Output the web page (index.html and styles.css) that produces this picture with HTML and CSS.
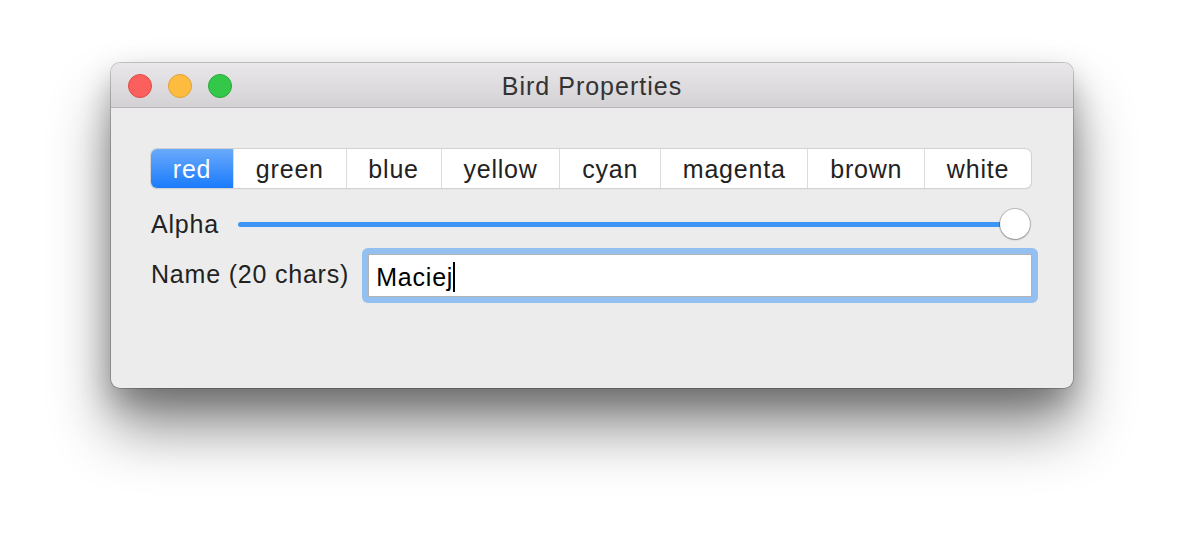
FILE: index.html
```html
<!DOCTYPE html>
<html>
<head>
<meta charset="utf-8">
<link rel="stylesheet" href="styles.css">
</head>
<body>
<div class="window">
  <div class="titlebar">
    <div class="lights">
      <span class="light red"></span>
      <span class="light yellow"></span>
      <span class="light green"></span>
    </div>
    <div class="title">Bird Properties</div>
  </div>
  <div class="content">
    <div class="segments">
      <div class="seg selected">red</div>
      <div class="seg">green</div>
      <div class="seg">blue</div>
      <div class="seg">yellow</div>
      <div class="seg">cyan</div>
      <div class="seg">magenta</div>
      <div class="seg">brown</div>
      <div class="seg">white</div>
    </div>
    <div class="row slider-row">
      <div class="label">Alpha</div>
      <div class="slider">
        <div class="track"></div>
        <div class="knob"></div>
      </div>
    </div>
    <div class="row name-row">
      <div class="label">Name (20 chars)</div>
      <div class="field-ring">
        <div class="field"><span class="value">Maciej</span><span class="caret"></span></div>
      </div>
    </div>
  </div>
</div>
</body>
</html>
```

FILE: styles.css
```css
html, body {
  margin: 0;
  padding: 0;
  background: #ffffff;
}
body {
  width: 1184px;
  height: 548px;
  padding: 63px 0 0 111px;
  box-sizing: border-box;
  font-family: "Liberation Sans", Arial, sans-serif;
  color: #222222;
  overflow: hidden;
}
.window {
  width: 962px;
  height: 325px;
  background: #ececec;
  border-radius: 9px;
  box-shadow: 0 0 0 1px rgba(0,0,0,0.2), 0 40px 60px rgba(0,0,0,0.45), 0 14px 30px rgba(0,0,0,0.25);
  display: flex;
  flex-direction: column;
  overflow: hidden;
}
.titlebar {
  height: 44px;
  flex: none;
  background: linear-gradient(#e9e7e9, #d3d1d3);
  border-bottom: 1px solid #b7b5b7;
  display: flex;
  align-items: center;
  position: relative;
}
.lights {
  display: flex;
  gap: 16px;
  padding-left: 17px;
  position: absolute;
  left: 0;
  top: 11px;
}
.light {
  width: 24px;
  height: 24px;
  border-radius: 50%;
  box-sizing: border-box;
}
.light.red { background: #fc605c; border: 1px solid #de4a46; }
.light.yellow { background: #fdbc40; border: 1px solid #dea236; }
.light.green { background: #34c84a; border: 1px solid #27a83a; }
.title {
  flex: 1;
  text-align: center;
  font-size: 25px;
  letter-spacing: 1px;
  color: #333333;
  padding-top: 2px;
}
.content {
  padding: 41px 42px 0 40px;
  display: flex;
  flex-direction: column;
}
.segments {
  display: flex;
  height: 39px;
  box-sizing: border-box;
  background: #ffffff;
  border-radius: 6px;
  box-shadow: 0 0 0 1px #d2d2d2, 0 1px 1px rgba(0,0,0,0.25);
  overflow: hidden;
}
.seg {
  flex: 1 1 auto;
  display: flex;
  align-items: center;
  justify-content: center;
  font-size: 25px;
  letter-spacing: 0.8px;
  color: #222222;
  border-left: 1px solid #dcdcdc;
  padding: 1px 18px 0;
}
.seg:first-child { border-left: none; }
.seg.selected {
  background: linear-gradient(#6aaafb, #1a7bfb);
  color: #ffffff;
}
.row {
  display: flex;
  align-items: center;
}
.label {
  font-size: 25px;
  letter-spacing: 0.8px;
  color: #222222;
  flex: none;
}
.slider-row {
  margin-top: 19px;
  height: 35px;
}
.slider {
  flex: 1;
  position: relative;
  height: 35px;
  margin-left: 19px;
  display: flex;
  align-items: center;
}
.track {
  flex: 1;
  height: 5px;
  border-radius: 3px;
  background: #3f95f6;
  margin-right: 16px;
}
.knob {
  position: absolute;
  right: 1px;
  top: 2px;
  width: 30px;
  height: 30px;
  border-radius: 50%;
  background: #ffffff;
  box-shadow: 0 0 0 1px rgba(0,0,0,0.2), 0 1px 2px rgba(0,0,0,0.25);
}
.name-row {
  margin-top: 6px;
  align-items: flex-start;
}
.name-row .label {
  padding-top: 12px;
}
.field-ring {
  flex: 1;
  margin-left: 13px;
  margin-right: -7px;
  padding: 6px;
  border-radius: 6px;
  background: #93c0f0;
}
.field {
  height: 43px;
  box-sizing: border-box;
  background: #ffffff;
  border: 1px solid #b4b4b4;
  display: flex;
  align-items: center;
  padding: 4px 0 0 7px;
  font-size: 25px;
  letter-spacing: 0.8px;
  color: #000000;
}
.caret {
  display: inline-block;
  width: 2px;
  height: 30px;
  background: #000000;
  margin-top: -2px;
}
```
